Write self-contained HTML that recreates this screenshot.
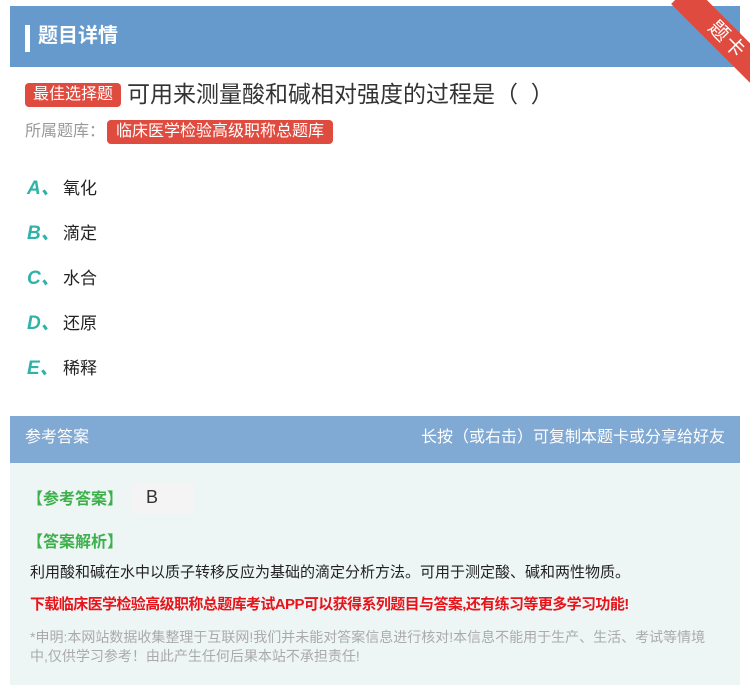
<!DOCTYPE html>
<html><head><meta charset="utf-8"><style>
body{margin:0;width:750px;height:685px;background:#fff;position:relative;overflow:hidden;font-family:"Liberation Sans","Noto Sans CJK SC",sans-serif;}
.hd{position:absolute;left:10px;top:6px;width:730px;height:61px;background:#6699cc;}
.hd .bar{position:absolute;left:15px;top:19px;width:5px;height:27px;background:#fff;}
.hd .t{position:absolute;left:28px;top:16px;font-size:20px;color:#fff;font-weight:bold;line-height:28px;}
.rib{position:absolute;left:662px;top:26px;width:130px;height:28px;background:#e04b3f;transform:rotate(45deg);color:#fff;font-size:20px;text-align:center;line-height:28px;letter-spacing:2px;}
.tag{display:inline-block;background:#e04b3f;color:#fff;border-radius:4px;}
.q{position:absolute;left:25px;top:79px;font-size:23px;color:#333;line-height:30px;}
.q .tag{font-size:16px;line-height:24px;padding:0 8px;vertical-align:3px;margin-right:6px;}
.src{position:absolute;left:25px;top:120px;font-size:16px;color:#999;line-height:24px;}
.src .tag{font-size:16px;padding:0 9px;line-height:24px;margin-left:2px;}
.op{position:absolute;left:27px;font-size:17px;color:#222;}
.op b{color:#2fb3a8;font-style:italic;font-size:19px;display:inline-block;width:36px;}
.ah{position:absolute;left:10px;top:416px;width:730px;height:47px;background:#80a9d4;color:#fff;font-size:16px;line-height:44px;}
.ab{position:absolute;left:10px;top:463px;width:730px;height:222px;background:#eef6f5;}
.g{color:#3db04c;font-size:16px;font-weight:bold;position:absolute;}
</style></head><body>
<div class="hd"><div class="bar"></div><div class="t">题目详情</div></div>
<div class="rib">题卡</div>
<div class="q"><span class="tag">最佳选择题</span>可用来测量酸和碱相对强度的过程是（&nbsp;&nbsp;）</div>
<div class="src">所属题库：<span class="tag">临床医学检验高级职称总题库</span></div>
<div class="op" style="top:173px"><b>A、</b>氧化</div>
<div class="op" style="top:218px"><b>B、</b>滴定</div>
<div class="op" style="top:263px"><b>C、</b>水合</div>
<div class="op" style="top:308px"><b>D、</b>还原</div>
<div class="op" style="top:353px"><b>E、</b>稀释</div>
<div class="ah"><span style="position:absolute;left:15px">参考答案</span><span style="position:absolute;right:15px">长按（或右击）可复制本题卡或分享给好友</span></div>
<div class="ab"></div>
<div class="g" style="left:27px;top:485px">【参考答案】</div>
<div style="position:absolute;left:132px;top:484px;width:62px;height:30px;background:#f4f4f4;font-size:18px;color:#333;line-height:26px;padding-left:14px;box-sizing:border-box">B</div>
<div class="g" style="left:27px;top:528px">【答案解析】</div>
<div style="position:absolute;left:30px;top:561px;font-size:15px;color:#222">利用酸和碱在水中以质子转移反应为基础的滴定分析方法。可用于测定酸、碱和两性物质。</div>
<div style="position:absolute;left:30px;top:593px;font-size:15px;color:#e8141b;font-weight:bold;letter-spacing:-0.6px">下载临床医学检验高级职称总题库考试APP可以获得系列题目与答案,还有练习等更多学习功能!</div>
<div style="position:absolute;left:30px;top:628px;width:690px;font-size:14px;color:#aaa;line-height:19px">*申明:本网站数据收集整理于互联网!我们并未能对答案信息进行核对!本信息不能用于生产、生活、考试等情境中,仅供学习参考！由此产生任何后果本站不承担责任!</div>
</body></html>
